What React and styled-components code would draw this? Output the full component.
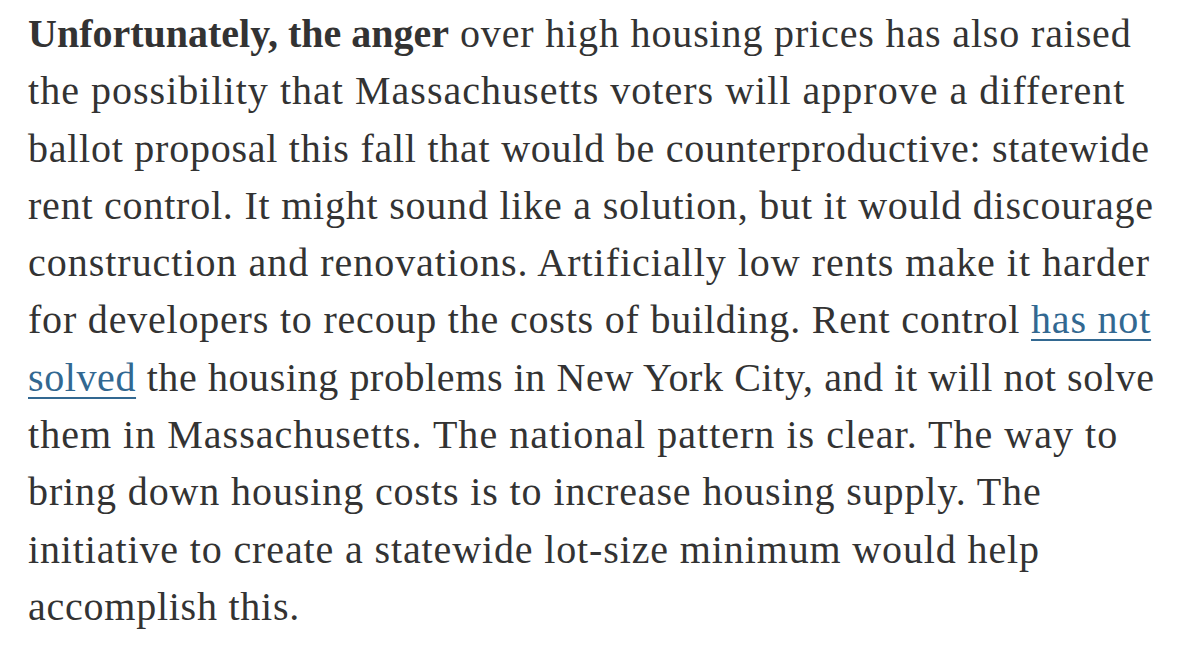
import React from 'react';
import styled, { createGlobalStyle } from 'styled-components';

const Global = createGlobalStyle`
  html, body {
    margin: 0;
    padding: 0;
    background: #ffffff;
  }
`;

const Page = styled.div`
  width: 1200px;
  height: 650px;
  overflow: hidden;
  background: #ffffff;
  padding: 5px 0 0 28px;
  box-sizing: border-box;
`;

const Paragraph = styled.p`
  margin: 0;
  font-family: "Liberation Serif", "Times New Roman", serif;
  font-size: 40px;
  line-height: 57.3px;
  color: #333333;
`;

// each line is set on its own so the breaks fall where the article's do
const Line = styled.span`
  display: block;
  white-space: nowrap;
  letter-spacing: ${({ $spacing }) => $spacing ?? 0.75}px;
`;

const Lead = styled.strong`
  font-weight: 700;
  letter-spacing: 0;
  color: #333333;
`;

const Link = styled.a`
  color: #326891;
  text-decoration: underline;
  text-decoration-thickness: 2px;
  text-underline-offset: 6px;
`;

const head = [
  { t: 'the possibility that Massachusetts voters will approve a different', s: 1.02 },
  { t: 'ballot proposal this fall that would be counterproductive: statewide', s: 0.75 },
  { t: 'rent control. It might sound like a solution, but it would discourage', s: 0.78 },
  { t: 'construction and renovations. Artificially low rents make it harder', s: 0.98 },
];

const tail = [
  { t: 'them in Massachusetts. The national pattern is clear. The way to', s: 1.02 },
  { t: 'bring down housing costs is to increase housing supply. The', s: 0.89 },
  { t: 'initiative to create a statewide lot-size minimum would help', s: 0.87 },
  { t: 'accomplish this.', s: 0.75 },
];

export default function App() {
  return (
    <>
      <Global />
      <Page>
        <Paragraph>
          <Line $spacing={0.85}>
            <Lead>Unfortunately, the anger</Lead> over high housing prices has also raised
          </Line>
          {head.map(({ t, s }) => (
            <Line key={t} $spacing={s}>{t}</Line>
          ))}
          <Line $spacing={0.8}>
            for developers to recoup the costs of building. Rent control <Link href="#">has not</Link>
          </Line>
          <Line $spacing={0.6}>
            <Link href="#">solved</Link> the housing problems in New York City, and it will not solve
          </Line>
          {tail.map(({ t, s }) => (
            <Line key={t} $spacing={s}>{t}</Line>
          ))}
        </Paragraph>
      </Page>
    </>
  );
}
